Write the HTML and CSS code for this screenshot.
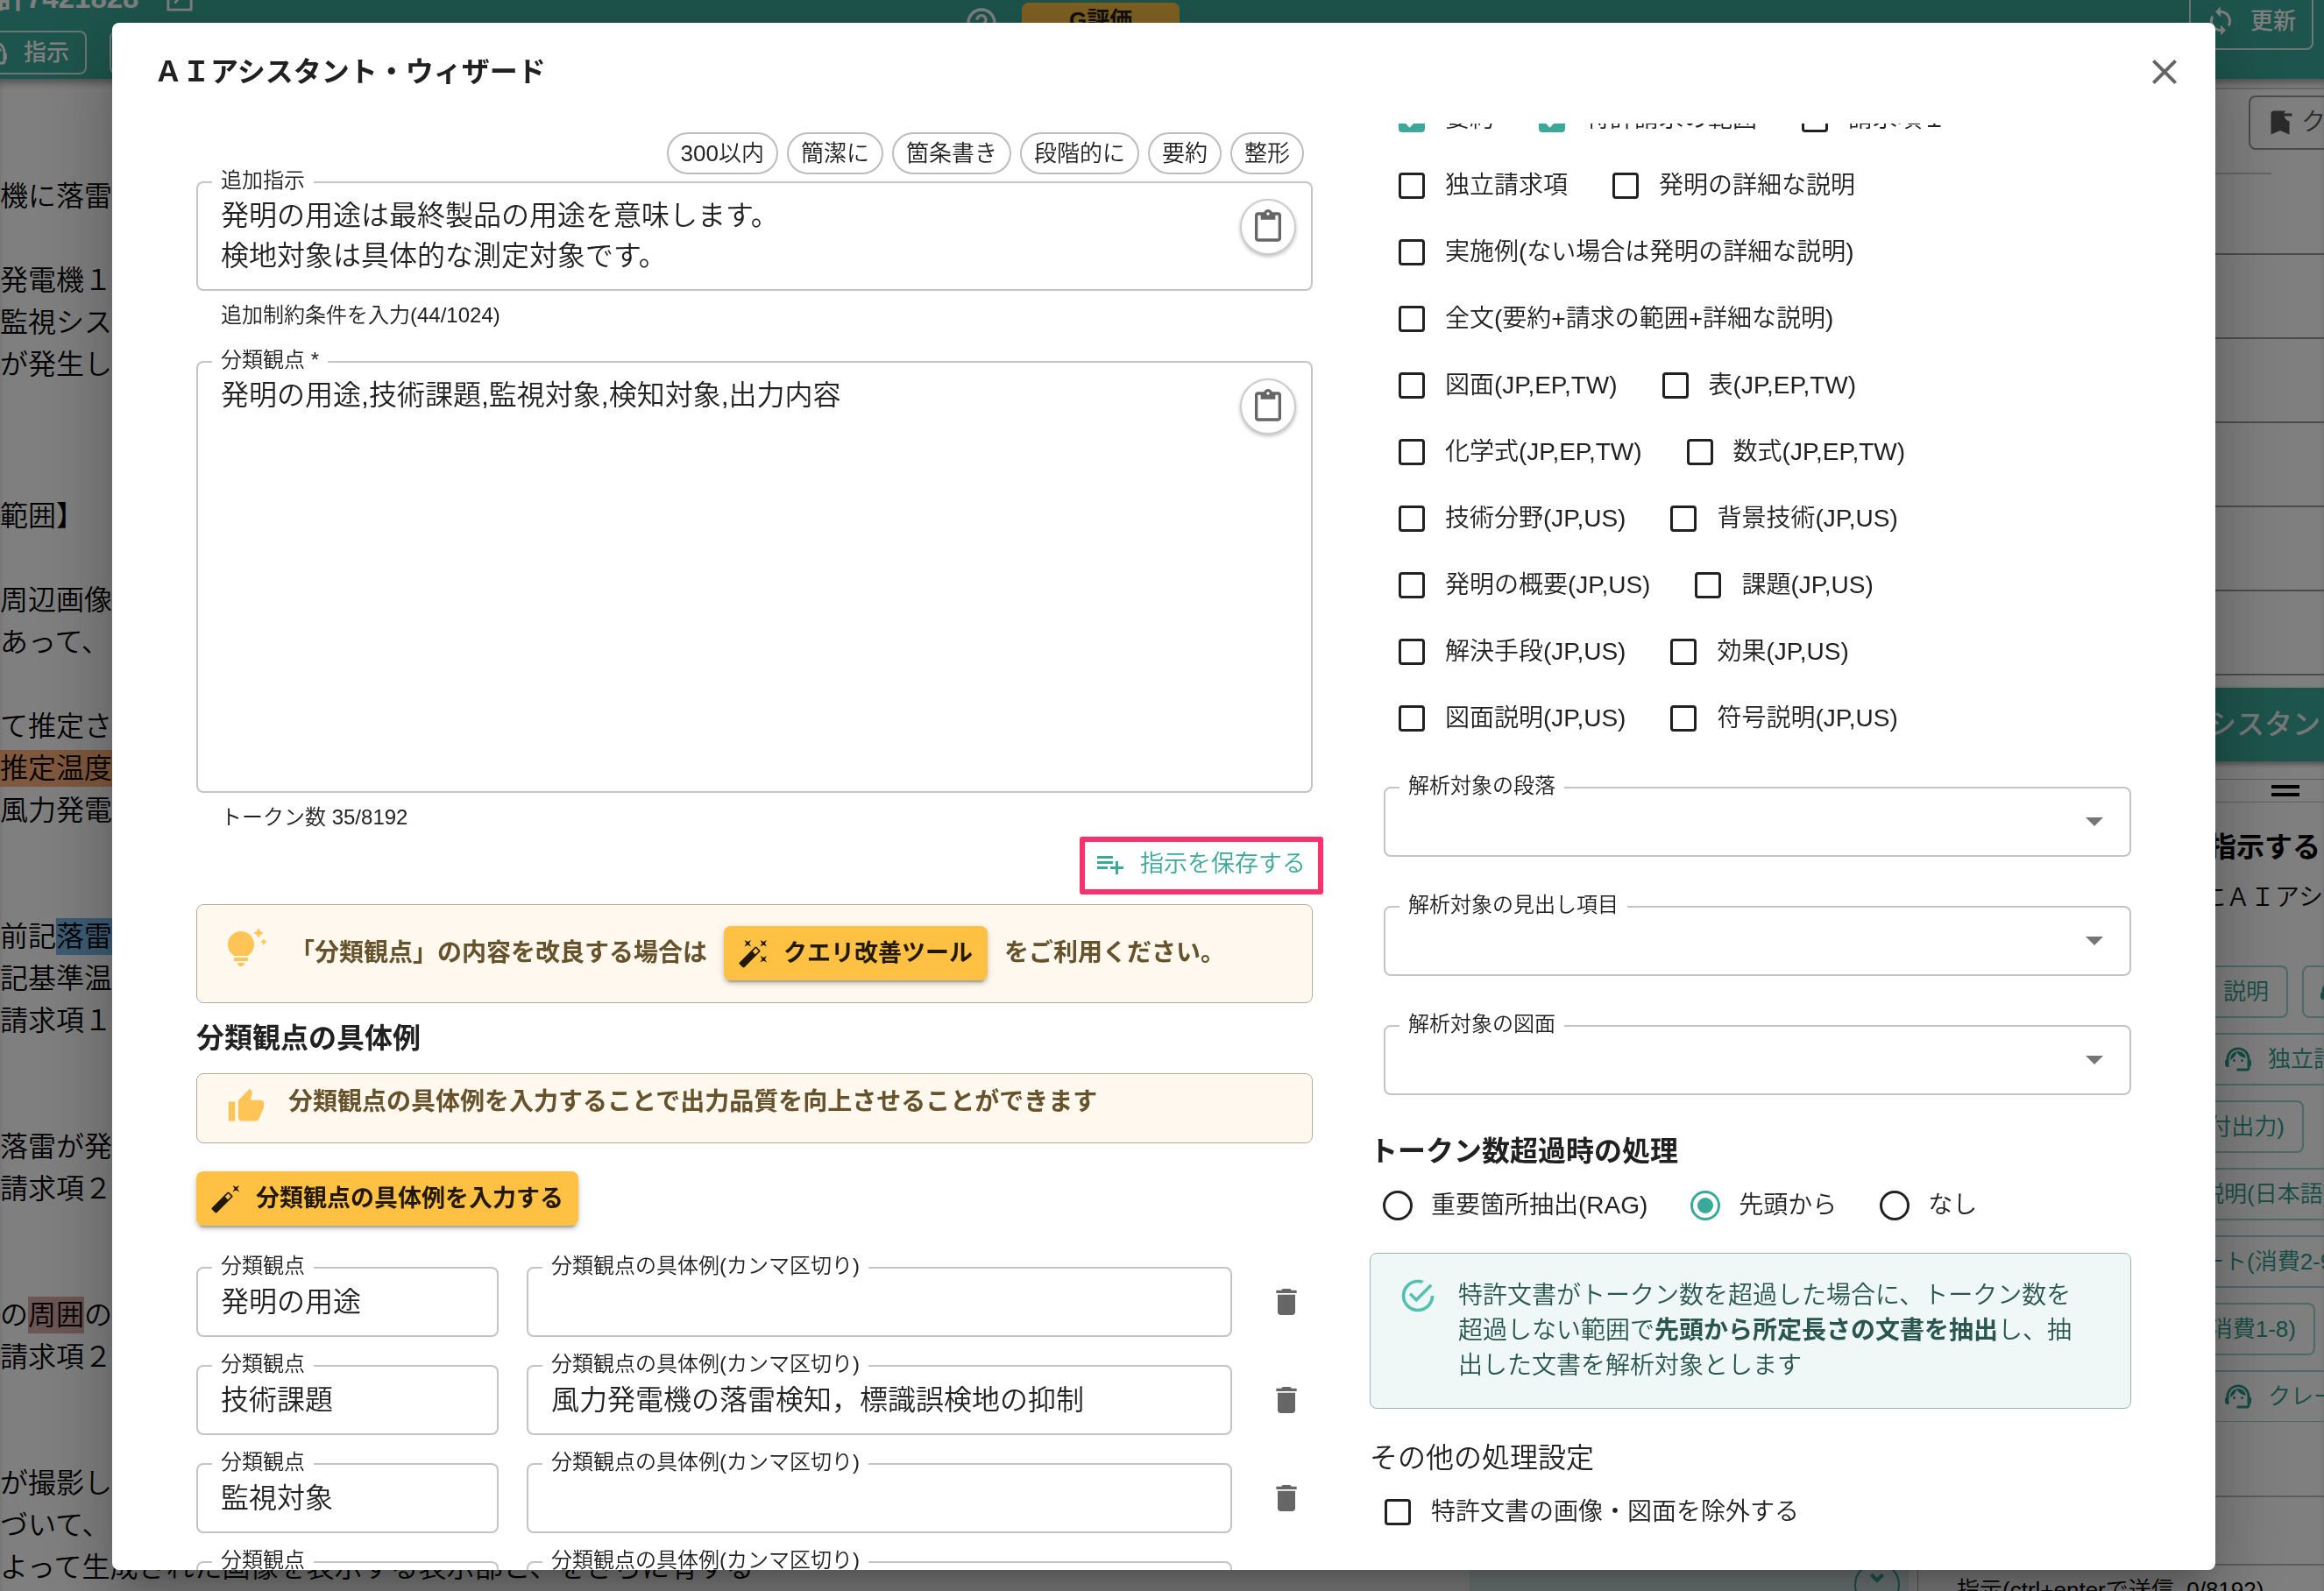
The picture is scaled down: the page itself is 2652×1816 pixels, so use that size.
FILE: index.html
```html
<!DOCTYPE html>
<html lang="ja">
<head>
  <meta charset="UTF-8">
  <title>ＡＩアシスタント・ウィザード</title>
  <link rel="stylesheet" href="styles.css">
</head>
<body>

  <!-- shared icons -->
  <svg class="sprite">
    <symbol id="i-agent" viewBox="0 0 24 24"><path d="M21 12.22C21 6.73 16.74 3 12 3c-4.69 0-9 3.65-9 9.28-.6.34-1 .98-1 1.72v2c0 1.1.9 2 2 2h1v-6.1c0-3.87 3.13-7 7-7s7 3.13 7 7V19h-8v2h8c1.1 0 2-.9 2-2v-1.22c.59-.31 1-.92 1-1.64v-2.3c0-.7-.41-1.31-1-1.62z"/><circle cx="9" cy="13" r="1"/><circle cx="15" cy="13" r="1"/><path d="M18 11.03C17.52 8.18 15.04 6 12.05 6c-3.03 0-6.29 2.51-6.03 6.45 2.47-1.01 4.33-3.21 4.86-5.89 1.31 2.63 4 4.44 7.12 4.47z"/></symbol>
    <symbol id="i-paste" viewBox="0 0 24 24"><path d="M19 2h-4.18C14.4.84 13.3 0 12 0c-1.3 0-2.4.84-2.82 2H5c-1.1 0-2 .9-2 2v16c0 1.1.9 2 2 2h14c1.1 0 2-.9 2-2V4c0-1.1-.9-2-2-2zm-7 0c.55 0 1 .45 1 1s-.45 1-1 1-1-.45-1-1 .45-1 1-1zm7 18H5V4h2v3h10V4h2v16z"/></symbol>
    <symbol id="i-delete" viewBox="0 0 24 24"><path d="M6 19c0 1.1.9 2 2 2h8c1.1 0 2-.9 2-2V7H6v12zM19 4h-3.5l-1-1h-5l-1 1H5v2h14V4z"/></symbol>
    <symbol id="i-arrow" viewBox="0 0 24 24"><path d="m7 10 5 5 5-5z"/></symbol>
  </svg>

  <div class="app">
    <header class="topbar">
      <div class="topbar-left">
        <div class="doc-no">計7421828
          <svg class="icon-doc" viewBox="0 0 32 32"><path d="M2 2v28h28V2" fill="none" stroke="currentColor" stroke-width="3"/><path d="M10 22 20 10" stroke="currentColor" stroke-width="3"/></svg>
        </div>
        <div class="topbar-buttons">
          <button class="bar-btn"><svg class="icon"><use href="#i-agent"/></svg>指示</button>
          <button class="bar-btn">説明</button>
        </div>
      </div>
      <div class="topbar-center">
        <svg class="icon-lg" viewBox="0 0 24 24"><path d="M11 18h2v-2h-2v2zm1-16C6.48 2 2 6.48 2 12s4.48 10 10 10 10-4.48 10-10S17.52 2 12 2zm0 18c-4.41 0-8-3.59-8-8s3.59-8 8-8 8 3.59 8 8-3.59 8-8 8zm0-14c-2.21 0-4 1.79-4 4h2c0-1.1.9-2 2-2s2 .9 2 2c0 2-3 1.75-3 5h2c0-2.25 3-2.5 3-5 0-2.21-1.79-4-4-4z"/></svg>
        <button class="grade-btn">G評価</button>
      </div>
      <button class="bar-btn refresh"><svg class="icon" viewBox="0 0 24 24"><path d="M12 4V1L8 5l4 4V6c3.31 0 6 2.69 6 6 0 1.01-.25 1.97-.7 2.8l1.46 1.46C19.54 15.03 20 13.57 20 12c0-4.42-3.58-8-8-8zm0 14c-3.31 0-6-2.69-6-6 0-1.01.25-1.97.7-2.8L5.24 7.74C4.46 8.97 4 10.43 4 12c0 4.42 3.58 8 8 8v3l4-4-4-4v3z"/></svg>更新</button>
    </header>

    <div class="workspace">
      <main class="doc">
        <p class="doc-head">機に落雷<br><br>発電機１<br>監視シス<br>が発生し</p>
        <p>範囲】<br><br>周辺画像<br>あって、<br><br>て推定さ<br><mark class="mark-orange">推定温度</mark>が<br>風力発電機<br><br><br>前記<mark class="mark-blue">落雷</mark><br>記基準温<br>請求項１<br><br><br>落雷が発<br>請求項２<br><br><br>の<mark class="mark-rose">周囲</mark>の<br>請求項２<br><br><br>が撮影し<br>づいて、<br>よって生成された画像を表示する表示部と、をさらに有する</p>
      </main>

      <div class="side">
        <aside class="panel">
          <div class="panel-tools">
            <button class="clip-btn"><svg class="icon" viewBox="0 0 24 24"><path d="M21 7h-6V5h6v2zm-2 3.9c-2.28-.46-4-2.48-4-4.9 0-1.13.37-2.16 1-3H7c-1.1 0-2 .9-2 2v16l7-3 7 3V10.9z"/></svg>クリップ</button>
          </div>
          <div class="panel-rule"></div>
          <ul class="panel-rows">
            <li></li><li></li><li></li><li></li><li></li><li></li>
          </ul>
          <button class="panel-main">シスタント</button>
          <div class="resizer"><span></span></div>
          <h2>指示する</h2>
          <p>にＡＩアシスタント</p>
          <div class="prompts">
            <div class="prompt-row"><button class="prompt prompt-sm">説明</button><button class="prompt prompt-agent"><svg class="icon"><use href="#i-agent"/></svg></button></div>
            <div class="prompt-row"><button class="prompt prompt-wide prompt-agent"><svg class="icon"><use href="#i-agent"/></svg>独立請求項</button></div>
            <div class="prompt-row"><button class="prompt prompt-md">付出力)</button></div>
            <div class="prompt-row"><button class="prompt prompt-wide">説明(日本語)</button></div>
            <div class="prompt-row"><button class="prompt prompt-wide">ート(消費2-9)</button></div>
            <div class="prompt-row"><button class="prompt prompt-lg">消費1-8)</button></div>
            <div class="prompt-row"><button class="prompt prompt-wide prompt-agent"><svg class="icon"><use href="#i-agent"/></svg>クレーム</button></div>
          </div>
          <div class="prompt-box"></div>
        </aside>
        <div class="side-foot">
          <div class="viewer">
            <button class="round-btn" aria-label="下へ"><svg viewBox="0 0 24 24"><path d="m4 5 8 8 8-8" fill="none" stroke="currentColor" stroke-width="5"/></svg></button>
          </div>
          <div class="counter">指示(ctrl+enterで送信, 0/8192)</div>
          <svg class="pointer" viewBox="0 0 8 8"><path d="M0 0v8h8z" fill="#fff"/></svg>
        </div>
      </div>
    </div>
  </div>

  <div class="backdrop">
    <section class="dialog" role="dialog" aria-labelledby="dlg-title">
      <header class="dialog-head">
        <h1 id="dlg-title">ＡＩアシスタント・ウィザード</h1>
        <button class="icon-btn close-btn" aria-label="閉じる"><svg viewBox="0 0 24 24"><path d="M19 6.41 17.59 5 12 10.59 6.41 5 5 6.41 10.59 12 5 17.59 6.41 19 12 13.41 17.59 19 19 17.59 13.41 12z"/></svg></button>
      </header>

      <div class="dialog-body">
        <div class="col-left">
          <div class="chips">
            <button class="chip">300以内</button>
            <button class="chip">簡潔に</button>
            <button class="chip">箇条書き</button>
            <button class="chip">段階的に</button>
            <button class="chip">要約</button>
            <button class="chip">整形</button>
          </div>

          <fieldset class="field">
            <legend><label for="extra">追加指示</label></legend>
            <textarea id="extra" rows="2">発明の用途は最終製品の用途を意味します。
検地対象は具体的な測定対象です。</textarea>
            <button class="paste-btn" aria-label="貼り付け"><svg><use href="#i-paste"/></svg></button>
          </fieldset>
          <p class="helper">追加制約条件を入力(44/1024)</p>

          <fieldset class="field field-next">
            <legend><label for="views">分類観点 *</label></legend>
            <textarea id="views" rows="10">発明の用途,技術課題,監視対象,検知対象,出力内容</textarea>
            <button class="paste-btn" aria-label="貼り付け"><svg><use href="#i-paste"/></svg></button>
          </fieldset>
          <p class="helper">トークン数 35/8192</p>

          <div class="save-frame">
            <button class="save-btn"><svg class="icon" viewBox="0 0 24 24"><path d="M14 10H2v2h12v-2zm0-4H2v2h12V6zm4 8v-4h-2v4h-4v2h4v4h2v-4h4v-2h-4zM2 16h8v-2H2v2z"/></svg>指示を保存する</button>
          </div>

          <div class="alert alert-tool">
            <svg class="alert-icon" viewBox="0 0 24 24"><path d="M7 20h4c0 1.1-.9 2-2 2s-2-.9-2-2zm-2-1h8v-2H5v2zm11.5-9.5c0 3.82-2.66 5.86-3.77 6.5H5.27C4.16 15.36 1.5 13.32 1.5 9.5 1.5 5.36 4.86 2 9 2s7.5 3.36 7.5 7.5zm4.87-2.13L20 8l1.37.63L22 10l.63-1.37L24 8l-1.37-.63L22 6l-.63 1.37zM19 6l.94-2.06L22 3l-2.06-.94L19 0l-.94 2.06L16 3l2.06.94L19 6z"/></svg>
            <div class="alert-msg">
              <span>「分類観点」の内容を改良する場合は</span>
              <button class="amber-btn"><svg class="icon" viewBox="0 0 24 24"><path d="M7.5 5.6 10 7 8.6 4.5 10 2 7.5 3.4 5 2l1.4 2.5L5 7zm12 9.8L17 14l1.4 2.5L17 19l2.5-1.4L22 19l-1.4-2.5L22 14zM22 2l-2.5 1.4L17 2l1.4 2.5L17 7l2.5-1.4L22 7l-1.4-2.5zm-7.63 5.29a1 1 0 0 0-1.41 0L1.29 18.96c-.39.39-.39 1.02 0 1.41l2.34 2.34c.39.39 1.02.39 1.41 0L16.7 11.05c.39-.39.39-1.02 0-1.41l-2.33-2.35zm-1.03 5.49-2.12-2.12 2.44-2.44 2.12 2.12-2.44 2.44z"/></svg>クエリ改善ツール</button>
              <span>をご利用ください。</span>
            </div>
          </div>

          <h2>分類観点の具体例</h2>

          <div class="alert">
            <svg class="alert-icon alert-icon-thumb" viewBox="0 0 24 24"><path d="M1 21h4V9H1v12zm22-11c0-1.1-.9-2-2-2h-6.31l.95-4.57.03-.32c0-.41-.17-.79-.44-1.06L14.17 1 7.59 7.59C7.22 7.95 7 8.45 7 9v10c0 1.1.9 2 2 2h9c.83 0 1.54-.5 1.84-1.22l3.02-7.05c.09-.23.14-.47.14-.73v-2z"/></svg>
            <div class="alert-msg">分類観点の具体例を入力することで出力品質を向上させることができます</div>
          </div>

          <button class="amber-btn fill-btn"><svg class="icon" viewBox="0 0 24 24"><path d="M22 2l-2.5 1.4L17 2l1.4 2.5L17 7l2.5-1.4L22 7l-1.4-2.5zm-7.63 5.29a1 1 0 0 0-1.41 0L1.29 18.96c-.39.39-.39 1.02 0 1.41l2.34 2.34c.39.39 1.02.39 1.41 0L16.7 11.05c.39-.39.39-1.02 0-1.41l-2.33-2.35zm-1.03 5.49-2.12-2.12 2.44-2.44 2.12 2.12-2.44 2.44z"/></svg>分類観点の具体例を入力する</button>

          <div class="examples">
            <div class="example">
              <fieldset class="field"><legend><label for="v1">分類観点</label></legend><input id="v1" type="text" value="発明の用途"></fieldset>
              <fieldset class="field"><legend><label for="e1">分類観点の具体例(カンマ区切り)</label></legend><input id="e1" type="text"></fieldset>
              <button class="icon-btn" aria-label="削除"><svg><use href="#i-delete"/></svg></button>
            </div>
            <div class="example">
              <fieldset class="field"><legend><label for="v2">分類観点</label></legend><input id="v2" type="text" value="技術課題"></fieldset>
              <fieldset class="field"><legend><label for="e2">分類観点の具体例(カンマ区切り)</label></legend><input id="e2" type="text" value="風力発電機の落雷検知，標識誤検地の抑制"></fieldset>
              <button class="icon-btn" aria-label="削除"><svg><use href="#i-delete"/></svg></button>
            </div>
            <div class="example">
              <fieldset class="field"><legend><label for="v3">分類観点</label></legend><input id="v3" type="text" value="監視対象"></fieldset>
              <fieldset class="field"><legend><label for="e3">分類観点の具体例(カンマ区切り)</label></legend><input id="e3" type="text"></fieldset>
              <button class="icon-btn" aria-label="削除"><svg><use href="#i-delete"/></svg></button>
            </div>
            <div class="example">
              <fieldset class="field"><legend><label for="v4">分類観点</label></legend><input id="v4" type="text" value="検知対象"></fieldset>
              <fieldset class="field"><legend><label for="e4">分類観点の具体例(カンマ区切り)</label></legend><input id="e4" type="text"></fieldset>
              <button class="icon-btn" aria-label="削除"><svg><use href="#i-delete"/></svg></button>
            </div>
          </div>
        </div>

        <div class="col-right">
          <div class="targets">
            <div class="check-row">
              <label class="check"><input type="checkbox" checked>要約</label>
              <label class="check"><input type="checkbox" checked>特許請求の範囲</label>
              <label class="check"><input type="checkbox">請求項１</label>
            </div>
            <div class="check-row">
              <label class="check"><input type="checkbox">独立請求項</label>
              <label class="check"><input type="checkbox">発明の詳細な説明</label>
            </div>
            <div class="check-row">
              <label class="check"><input type="checkbox">実施例(ない場合は発明の詳細な説明)</label>
            </div>
            <div class="check-row">
              <label class="check"><input type="checkbox">全文(要約+請求の範囲+詳細な説明)</label>
            </div>
            <div class="check-row">
              <label class="check"><input type="checkbox">図面(JP,EP,TW)</label>
              <label class="check"><input type="checkbox">表(JP,EP,TW)</label>
            </div>
            <div class="check-row">
              <label class="check"><input type="checkbox">化学式(JP,EP,TW)</label>
              <label class="check"><input type="checkbox">数式(JP,EP,TW)</label>
            </div>
            <div class="check-row">
              <label class="check"><input type="checkbox">技術分野(JP,US)</label>
              <label class="check"><input type="checkbox">背景技術(JP,US)</label>
            </div>
            <div class="check-row">
              <label class="check"><input type="checkbox">発明の概要(JP,US)</label>
              <label class="check"><input type="checkbox">課題(JP,US)</label>
            </div>
            <div class="check-row">
              <label class="check"><input type="checkbox">解決手段(JP,US)</label>
              <label class="check"><input type="checkbox">効果(JP,US)</label>
            </div>
            <div class="check-row">
              <label class="check"><input type="checkbox">図面説明(JP,US)</label>
              <label class="check"><input type="checkbox">符号説明(JP,US)</label>
            </div>
          </div>

          <div class="selects">
            <fieldset class="field">
              <legend><label for="s1">解析対象の段落</label></legend>
              <select id="s1"><option></option></select>
              <svg class="select-arrow"><use href="#i-arrow"/></svg>
            </fieldset>
            <fieldset class="field">
              <legend><label for="s2">解析対象の見出し項目</label></legend>
              <select id="s2"><option></option></select>
              <svg class="select-arrow"><use href="#i-arrow"/></svg>
            </fieldset>
            <fieldset class="field">
              <legend><label for="s3">解析対象の図面</label></legend>
              <select id="s3"><option></option></select>
              <svg class="select-arrow"><use href="#i-arrow"/></svg>
            </fieldset>
          </div>

          <h2 class="over-title">トークン数超過時の処理</h2>
          <div class="check-row options">
            <label class="check"><input type="radio" name="over">重要箇所抽出(RAG)</label>
            <label class="check"><input type="radio" name="over" checked>先頭から</label>
            <label class="check"><input type="radio" name="over">なし</label>
          </div>

          <div class="alert alert-ok">
            <svg class="alert-icon" viewBox="0 0 24 24"><path d="M20 12A8 8 0 0 1 12 20A8 8 0 0 1 4 12A8 8 0 0 1 12 4C12.76 4 13.5 4.11 14.2 4.31L15.77 2.74C14.61 2.26 13.34 2 12 2A10 10 0 0 0 2 12A10 10 0 0 0 12 22A10 10 0 0 0 22 12M7.91 10.08L6.5 11.5L11 16L21 6L19.59 4.58L11 13.17L7.91 10.08Z"/></svg>
            <div class="alert-msg">特許文書がトークン数を超過した場合に、トークン数を超過しない範囲で<b>先頭から所定長さの文書を抽出</b>し、抽出した文書を解析対象とします</div>
          </div>

          <h2 class="other-title">その他の処理設定</h2>
          <div class="check-row options">
            <label class="check"><input type="checkbox">特許文書の画像・図面を除外する</label>
          </div>
        </div>
      </div>
    </section>
  </div>

</body>
</html>
```
FILE: styles.css
```css
* {
  box-sizing: border-box;
}
body {
  margin: 0;
  height: 100vh;
  overflow: hidden;
  background-color: #fff;
  color: #212121;
  font-family: "Liberation Sans", "Noto Sans CJK JP", sans-serif;
  font-size: 28px;
  font-weight: 350;
  line-height: 40px;
}
h1, h2, p, ul {
  margin: 0;
  padding: 0;
}
h1, h2 {
  font-size: 32px;
  font-weight: bold;
  line-height: 48px;
}
button, input, select, textarea {
  font: inherit;
  color: inherit;
}
button {
  display: flex;
  align-items: center;
  flex: none;
  padding: 0;
  border: none;
  background: none;
  white-space: nowrap;
  cursor: pointer;
}
svg {
  display: block;
  flex: none;
  fill: currentColor;
}
.sprite {
  display: none;
}
.icon {
  width: 36px;
  height: 36px;
}
.icon-lg {
  width: 40px;
  height: 40px;
}

/* page behind the dialog */
.app {
  display: flex;
  flex-direction: column;
  height: 100vh;
}
.topbar {
  display: flex;
  flex: none;
  justify-content: space-between;
  align-items: flex-start;
  height: 90px;
  overflow: hidden;
  background-color: #3aa99a;
  color: #fff;
}
.topbar-left {
  margin: -24px 0 0 -33px;
}
.doc-no {
  display: flex;
  align-items: center;
  gap: 32px;
  padding-left: 30px;
  height: 44px;
  font-size: 33px;
  font-weight: bold;
}
.icon-doc {
  width: 30px;
  height: 30px;
}
.topbar-buttons {
  display: flex;
  gap: 26px;
  padding-top: 15px;
}
.bar-btn {
  gap: 16px;
  height: 50px;
  padding: 0 18px 0 6px;
  border: 2px solid rgba(255, 255, 255, 0.8);
  border-radius: 8px;
  font-size: 26px;
  font-weight: 500;
}
.refresh {
  height: 66px;
  margin: -9px 12px 0 0;
  padding: 0 18px 0 16px;
}
.topbar-center {
  display: flex;
  gap: 26px;
  padding: 3px 272px 0 0;
  align-items: flex-start;
}
.topbar-center .icon-lg {
  margin-top: 3px;
}
.grade-btn {
  justify-content: center;
  width: 180px;
  height: 40px;
  border-radius: 8px;
  background-color: #ffc144;
  color: #212121;
  font-size: 26px;
  font-weight: bold;
}
.workspace {
  display: flex;
  flex: 1;
  min-height: 0;
  box-shadow: inset 0 8px 10px -4px rgba(0, 0, 0, 0.4);
}
.doc {
  flex: 1;
  min-width: 0;
  padding-top: 110px;
  font-size: 32px;
  line-height: 48px;
  color: #000;
}
.doc-head {
  margin-bottom: 125px;
}
mark {
  color: inherit;
  padding: 3px 0;
}
.mark-orange {
  background-color: #ffb07a;
}
.mark-blue {
  background-color: #7ab8e8;
}
.mark-rose {
  background-color: #d9aca8;
}
.side {
  display: flex;
  flex-direction: column;
  width: 975px;
}
.panel {
  flex: 1;
  align-self: flex-end;
  width: 140px;
  min-height: 0;
  padding-top: 10px;
  overflow: hidden;
  color: #000;
}
.panel-tools {
  border-top: 2px solid #ccc;
  padding: 7px 0 26px 54px;
}
.clip-btn {
  gap: 6px;
  height: 62px;
  padding: 0 16px;
  border: 2px solid #999;
  border-radius: 8px;
  color: #555;
}
.panel-rule {
  width: 80px;
  height: 2px;
  margin-bottom: -4px;
  background-color: #ccc;
}
.panel-rows li {
  height: 96px;
  border-bottom: 2px solid #999;
  list-style: none;
}
.panel-main {
  width: 260px;
  height: 84px;
  margin-top: 14px;
  padding-left: 8px;
  background-color: #3aa99a;
  color: #eee;
  font-size: 32px;
  font-weight: 500;
  box-shadow: 0 3px 6px rgba(0, 0, 0, 0.4);
}
.resizer {
  height: 27px;
  margin: 20px 0 27px;
  padding: 6px 0 0 80px;
  border: 1px solid #bbb;
  border-width: 1px 0;
}
.resizer span {
  display: block;
  width: 32px;
  height: 13px;
  border: 4px solid #000;
  border-width: 4px 0;
}
.panel h2 {
  padding-left: 8px;
  margin-bottom: 14px;
  white-space: nowrap;
}
.panel p {
  white-space: nowrap;
}
.prompts {
  display: flex;
  flex-direction: column;
  gap: 17px;
  height: 521px;
  margin-top: 57px;
  overflow: hidden;
}
.prompt-row {
  display: flex;
  gap: 16px;
}
.prompt {
  justify-content: flex-end;
  gap: 16px;
  height: 60px;
  padding-right: 20px;
  border: 2px solid #9cd4cc;
  border-left: none;
  border-radius: 0 8px 8px 0;
  color: #2a9a8a;
  font-size: 26px;
}
.prompt-sm {
  width: 99px;
}
.prompt-md {
  width: 117px;
}
.prompt-lg {
  width: 130px;
}
.prompt-wide {
  width: 300px;
  justify-content: flex-start;
}
.prompt-agent {
  padding-left: 24px;
}
.prompt-sm + .prompt-agent {
  padding-left: 16px;
  border-left: 2px solid #9cd4cc;
  border-radius: 8px;
}
.prompt-box {
  height: 80px;
  margin-top: 84px;
  border: 2px solid #bbb;
  border-width: 2px 0;
}
.side-foot {
  display: flex;
  height: 28px;
  overflow: hidden;
  color: #000;
}
.viewer {
  display: flex;
  justify-content: flex-end;
  width: 512px;
  padding-right: 20px;
  border-right: 1px solid #aaa;
  background: linear-gradient(to right, #dff1ef 501px, #fff 501px);
}
.round-btn {
  justify-content: center;
  align-items: flex-start;
  width: 52px;
  height: 52px;
  margin-top: -5px;
  padding-top: 8px;
  border: 2px solid #3aa99a;
  border-radius: 50%;
  color: #3aa99a;
}
.round-btn svg {
  width: 20px;
  height: 20px;
}
.counter {
  flex: 1;
  padding: 7px 0 0 44px;
  font-size: 26px;
}
.pointer {
  width: 8px;
  height: 8px;
  margin: 20px 8px 0 0;
}

/* dialog */
.backdrop {
  position: fixed;
  inset: 0;
  display: flex;
  padding: 26px 124px 24px 128px;
  background-color: rgba(0, 0, 0, 0.5);
}
.dialog {
  display: flex;
  flex: 1;
  flex-direction: column;
  min-width: 0;
  overflow: hidden;
  border-radius: 8px;
  background-color: #fff;
  box-shadow: 0 22px 30px -14px rgba(0, 0, 0, 0.2),
    0 48px 76px 6px rgba(0, 0, 0, 0.14),
    0 18px 92px 16px rgba(0, 0, 0, 0.12);
}
.dialog-head {
  display: flex;
  flex: none;
  justify-content: space-between;
  align-items: center;
  height: 115px;
  padding: 0 28px 3px 48px;
}
.icon-btn {
  justify-content: center;
  width: 60px;
  height: 56px;
  color: #666;
}
.icon-btn svg {
  width: 40px;
  height: 40px;
}
.close-btn svg {
  width: 48px;
  height: 48px;
}
.dialog-body {
  display: grid;
  flex: 1;
  grid-template-columns: 1274fr 869fr;
  gap: 65px;
  min-height: 0;
  padding: 0 96px;
  overflow: hidden;
}
.col-left, .col-right {
  min-width: 0;
}
.chips {
  display: flex;
  justify-content: flex-end;
  gap: 10px;
  margin-bottom: -5px;
  padding: 10px 10px 0 0;
}
.chip {
  height: 48px;
  padding: 0 14px;
  border: 2px solid #bdbdbd;
  border-radius: 24px;
  font-size: 26px;
}
.field {
  display: flex;
  min-width: 0;
  margin: 0;
  padding: 0 16px 13px;
  border: 2px solid #c4c4c4;
  border-radius: 8px;
}
.field-next {
  margin-top: 19px;
}
.field legend {
  padding: 0 10px 4px;
  font-size: 24px;
  line-height: 24px;
}
.field textarea, .field input, .field select {
  flex: 1;
  min-width: 0;
  height: 50px;
  margin: 0;
  padding: 0 10px 6px;
  border: none;
  outline: none;
  background: none;
  font-size: 32px;
}
.field textarea {
  height: auto;
  padding: 1px 10px 2px;
  line-height: 46px;
  resize: none;
  overflow: hidden;
}
.field select {
  appearance: none;
}
.select-arrow {
  width: 48px;
  height: 48px;
  color: #757575;
}
.paste-btn {
  justify-content: center;
  width: 64px;
  height: 64px;
  margin: 5px 1px 0 0;
  border: 2px solid #ccc;
  border-radius: 50%;
  background-color: #fff;
  color: #666;
  box-shadow: 0 2px 4px rgba(0, 0, 0, 0.25);
}
.paste-btn svg {
  width: 40px;
  height: 40px;
}
.helper {
  padding: 8px 28px 0;
  font-size: 24px;
}
.save-frame {
  width: fit-content;
  margin: 2px -12px 11px auto;
  border: 6px solid #f9316d;
  border-radius: 3px;
}
.save-btn {
  gap: 16px;
  height: 54px;
  padding: 0 14px 5px 11px;
  color: #3aa99a;
  font-size: 27px;
}
.alert {
  display: flex;
  gap: 24px;
  padding: 12px 32px 19px;
  border: 1px solid #b5ad9c;
  border-radius: 8px;
  background-color: #fff8ee;
  color: #66522b;
  font-weight: bold;
}
.alert-icon {
  width: 48px;
  height: 48px;
  margin-top: 2px;
  color: #ffc455;
}
.alert-icon-thumb {
  height: 44px;
  margin-top: 3px;
}
.alert-tool {
  gap: 26px;
  padding: 24px 32px 25px;
}
.alert-tool .alert-msg {
  display: flex;
  align-items: center;
  gap: 19px;
}
.amber-btn {
  gap: 16px;
  height: 62px;
  padding: 0 17px 0 16px;
  border-radius: 8px;
  background-color: #ffc144;
  color: #211905;
  font-size: 27px;
  font-weight: bold;
  box-shadow: 0 6px 2px -4px rgba(0, 0, 0, 0.2),
    0 4px 4px rgba(0, 0, 0, 0.14),
    0 2px 10px rgba(0, 0, 0, 0.12);
}
.fill-btn {
  margin: 32px 0 34px;
}
.col-left h2 {
  margin: 16px 0;
}
.examples {
  display: grid;
  gap: 19px;
}
.example {
  display: grid;
  grid-template-columns: 3fr 7fr 60px;
  gap: 32px;
}
.example .icon-btn {
  margin-top: 25px;
}

/* right column, scrolled past its first row */
.targets {
  margin: -43px 0 27px 10px;
}
.check-row {
  display: flex;
  gap: 28px;
}
.check {
  display: flex;
  align-items: center;
  height: 76px;
  white-space: nowrap;
}
.check input {
  display: grid;
  place-items: center;
  appearance: none;
  width: 30px;
  height: 30px;
  margin: 0 23px;
  border: 3px solid #212121;
  border-radius: 4px;
}
.check input[type="checkbox"]:checked {
  border-color: #3aa99a;
  background-color: #3aa99a;
}
.check input[type="checkbox"]:checked::after {
  content: "";
  width: 9px;
  height: 16px;
  margin-bottom: 4px;
  border: solid #fff;
  border-width: 0 3px 3px 0;
  transform: rotate(45deg);
}
.check input[type="radio"] {
  width: 34px;
  height: 34px;
  margin: 0 21px;
  border-radius: 50%;
}
.check input[type="radio"]:checked {
  border-color: #3aa99a;
}
.check input[type="radio"]:checked::after {
  content: "";
  width: 18px;
  height: 18px;
  border-radius: 50%;
  background-color: #3aa99a;
}
.selects {
  display: grid;
  gap: 43px;
  padding-left: 16px;
}
.over-title {
  margin-top: 40px;
}
.options {
  margin-left: -6px;
}
.alert-ok {
  margin-top: 16px;
  padding: 28px 48px 28px 32px;
  border-color: #9fb3b0;
  background-color: #eff8f7;
  color: #2a5650;
  font-weight: 350;
}
.alert-ok .alert-icon {
  width: 44px;
  height: 44px;
  margin-top: -2px;
  color: #55c0b1;
}
.other-title {
  margin-top: 32px;
  font-weight: 350;
}
```
